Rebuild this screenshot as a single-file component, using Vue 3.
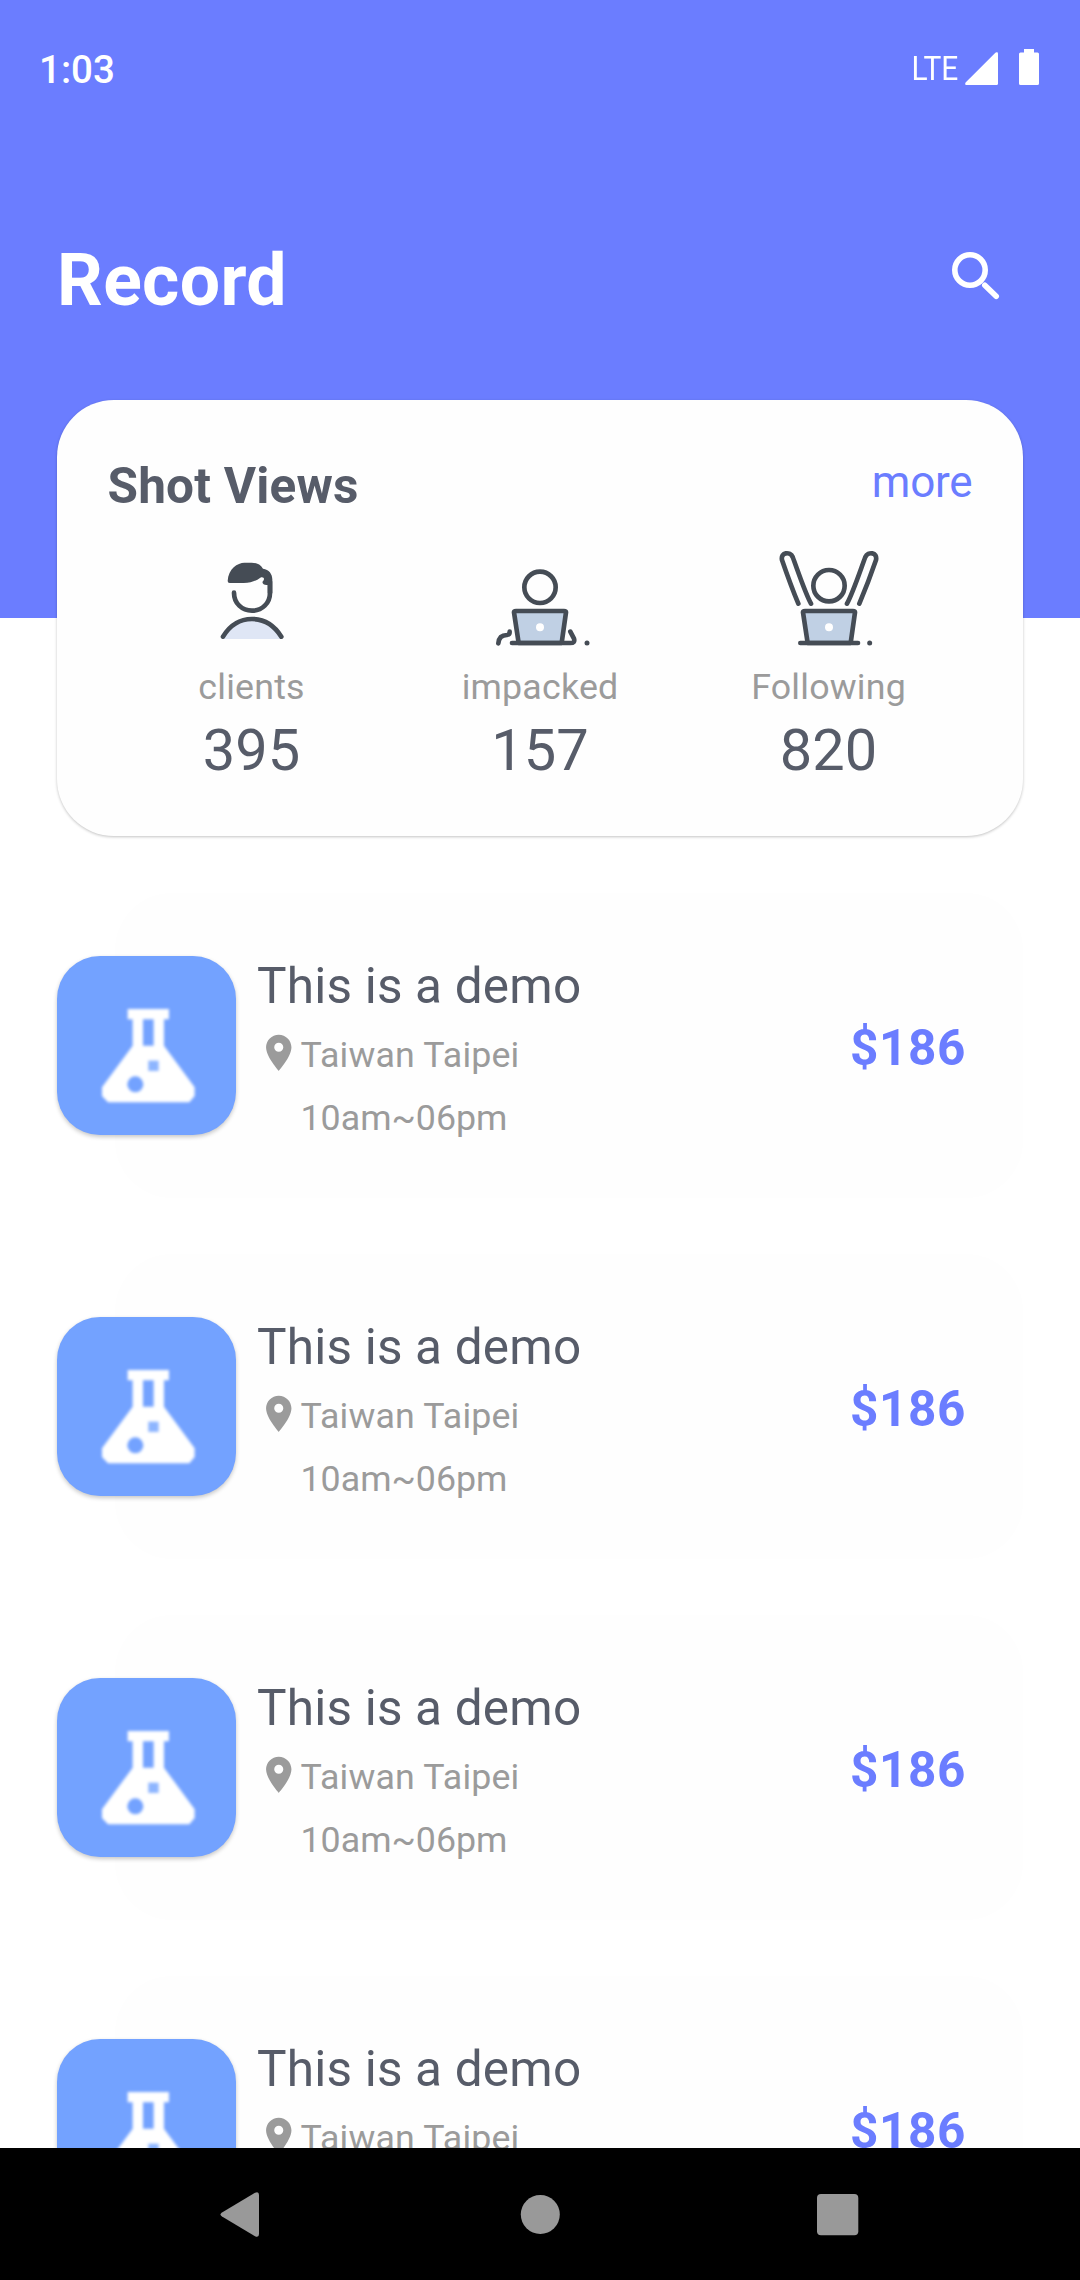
<script setup>
const stats = [
  { key: 'clients', label: 'clients', value: 395 },
  { key: 'impacked', label: 'impacked', value: 157 },
  { key: 'following', label: 'Following', value: 820 },
]
const records = Array.from({ length: 4 }, (_, id) => ({
  id,
  title: 'This is a demo',
  place: 'Taiwan Taipei',
  hours: '10am~06pm',
  price: '$186',
}))
</script>

<template>
  <div class="screen">
    <header class="hero">
      <div class="status">
        <span class="clock">1:03</span>
        <div class="indicators">
          <span class="lte">LTE</span>
          <svg class="signal" viewBox="0 0 33 33"><path d="M31.5 0.3Q33 0 33 1.6V31.5Q33 33 31.5 33H1.4Q-0.6 32.8 0.6 30.6L30.4 0.8Z" /></svg>
          <svg class="battery" viewBox="0 0 20 36"><path d="M5 0H15V3.5H18.5Q20 3.5 20 5V34.4Q20 36 18.4 36H1.6Q0 36 0 34.4V5Q0 3.5 1.5 3.5H5Z" /></svg>
        </div>
      </div>
      <div class="heading">
        <h1>Record</h1>
        <svg class="search" viewBox="0 0 50 50" fill="none" stroke="#fff">
          <circle cx="20" cy="20" r="15.2" stroke-width="5.6" />
          <path d="M30 31L32 33" stroke-width="4" />
          <path d="M34.8 35.2L46.2 46.2" stroke-width="5.6" stroke-linecap="round" />
        </svg>
      </div>
    </header>

    <section class="card">
      <div class="card-head">
        <h2>Shot Views</h2>
        <a class="more">more</a>
      </div>
      <div class="stats">
        <div v-for="s in stats" :key="s.key" class="stat">
          <svg v-if="s.key === 'clients'" class="figure" viewBox="483 504 300 300">
            <path d="M546 777Q578 718 633 718T721 777Z" fill="#dfe6f5" />
            <path d="M546 770Q578 717 633 717T721 770" class="line" />
            <path d="M579 638C579 670 603 692 633 692C663 692 687 670 687 638V605" class="line" />
            <path d="M560 603C562 566 590 548 610 548H632C648 548 658 554 666 566C684 568 694 582 694 598V640H680V615C668 617 660 608 667 602C672 596 667 589 658 593C646 602 631 609 608 609H566Q560 609 560 603Z" fill="#454c55" />
          </svg>
          <svg v-else-if="s.key === 'impacked'" class="figure" viewBox="270 84 300 300">
            <circle cx="420" cy="202" r="47" class="line" />
            <path d="M342 277Q342 273 348 273H492Q498 273 498 277L485 369H356Z" fill="#c0d0e4" class="line" />
            <circle cx="420" cy="322" r="12" fill="#fff" />
            <path d="M336 369H515M295 370Q297 345 321 345Q329 344 329 335M511 335L522 356Q526 369 511 369" class="line" />
            <circle cx="561" cy="369" r="7.5" fill="#454c55" />
          </svg>
          <svg v-else class="figure" viewBox="234 504 300 300">
            <circle cx="384" cy="617" r="47" class="line" />
            <path d="M292 671C279 640 254 572 243 540C238 516 268 514 275 531C289 568 312 638 330 671M475 671C488 640 514 572 525 540C530 516 501 514 493 531C479 568 456 638 438 671" class="line" />
            <path d="M306 697Q306 693 312 693H456Q462 693 462 697L449 789H320Z" fill="#c0d0e4" class="line" />
            <circle cx="384" cy="742" r="12" fill="#fff" />
            <path d="M298 789H471" class="line" />
            <circle cx="506" cy="789" r="7.5" fill="#454c55" />
          </svg>
          <span class="label">{{ s.label }}</span>
          <span class="value">{{ s.value }}</span>
        </div>
      </div>
    </section>

    <main class="list">
      <article v-for="r in records" :key="r.id" class="item">
        <div class="thumb">
          <svg class="flask" viewBox="182 232 286 286">
            <path fill="#fff" fill-rule="evenodd" d="M262 235H386V266H371V345L463 470V496L447 515H203L185 496V470L277 345V266H262ZM308 266V345H340V266Z" />
            <rect x="324" y="390" width="31" height="31" fill="#8db5ff" />
            <circle cx="285" cy="461" r="24" fill="#73a2ff" />
          </svg>
        </div>
        <div class="info">
          <h3>{{ r.title }}</h3>
          <p class="place">
            <svg class="pin" viewBox="0 0 24 24"><path d="M12 2C8.13 2 5 5.13 5 9c0 5.25 7 13 7 13s7-7.75 7-13c0-3.87-3.13-7-7-7zm0 9.5a2.5 2.5 0 0 1 0-5 2.5 2.5 0 0 1 0 5z" /></svg>
            <span>{{ r.place }}</span>
          </p>
          <p class="hours">{{ r.hours }}</p>
        </div>
        <span class="price">{{ r.price }}</span>
      </article>
    </main>

    <nav class="navbar">
      <svg viewBox="0 0 60 60"><path d="M43 8.800Q47 7 47 11V50Q47 54 43 52.200L10 32.600Q7 30.500 10 28.400Z" /></svg>
      <svg viewBox="0 0 60 60"><circle cx="30.300" cy="30.500" r="19.500" /></svg>
      <svg viewBox="0 0 60 60"><rect x="9" y="10" width="41.300" height="41.300" rx="4" /></svg>
    </nav>
  </div>
</template>

<style>
body {
  margin: 0;
}
</style>

<style scoped>
.screen {
  width: 1080px;
  height: 2280px;
  display: flex;
  flex-direction: column;
  overflow: hidden;
  background: #fff;
  font-family: Roboto, "Liberation Sans", sans-serif;
  color: #575c69;
}
h1, h2, h3, p {
  margin: 0;
}
svg {
  display: block;
  flex: none;
}
.hero {
  flex: none;
  box-sizing: border-box;
  height: 618px;
  padding-top: 40px;
  background: #6b7dff;
  color: #fff;
}
.status {
  display: flex;
  justify-content: space-between;
  height: 60px;
  padding: 0 41px 0 39px;
  line-height: 60px;
}
.clock {
  font-size: 38.5px;
  font-weight: 500;
}
.indicators {
  display: flex;
  align-items: flex-start;
}
.lte {
  margin: -2px 7px 0 0;
  font-size: 34px;
  transform: scaleX(0.88);
  transform-origin: right center;
}
.signal {
  width: 33px;
  height: 33px;
  margin: 12px 21px 0 0;
  fill: #fff;
}
.battery {
  width: 20px;
  height: 36px;
  margin-top: 9px;
  fill: #fff;
}
.heading {
  display: flex;
  justify-content: space-between;
  margin-top: 139px;
  padding: 0 80px 0 57px;
}
h1 {
  font-size: 71.5px;
  font-weight: 700;
  line-height: 84px;
  letter-spacing: 0.35px;
}
.search {
  width: 50px;
  height: 50px;
  margin-top: 11px;
}
.card {
  flex: none;
  box-sizing: border-box;
  width: 966px;
  height: 436px;
  margin: -218px auto 0;
  padding: 57px 49.5px 0;
  border-radius: 57px;
  background: #fefefe;
  box-shadow: 0 1px 3px rgba(0, 0, 0, 0.24);
}
.card-head {
  display: flex;
  justify-content: space-between;
  height: 58px;
  line-height: 58px;
}
h2 {
  padding-left: 1px;
  font-size: 49.5px;
  font-weight: 700;
  line-height: 58px;
  letter-spacing: 0.2px;
}
.more {
  height: 58px;
  margin: -4px 1px 0 0;
  font-size: 44px;
  letter-spacing: -0.2px;
  color: #6b7dff;
}
.stats {
  display: grid;
  grid-template-columns: repeat(3, 288.5px);
  margin: 33px 0 0 0.8px;
}
.stat {
  display: flex;
  flex-direction: column;
  align-items: center;
}
.figure {
  width: 100px;
  height: 100px;
}
.line {
  stroke: #454c55;
  stroke-width: 14;
  stroke-linecap: round;
  stroke-linejoin: round;
}
.line:not([fill]) {
  fill: none;
}
.label {
  margin-top: 18px;
  font-size: 35.75px;
  line-height: 42px;
  letter-spacing: 0.2px;
  color: #9b9b9b;
}
.value {
  margin-top: 8px;
  font-size: 57.75px;
  line-height: 68px;
}
.list {
  flex: 1;
  min-height: 0;
  overflow: hidden;
  padding-top: 57px;
}
.item {
  display: flex;
  align-items: center;
  box-sizing: border-box;
  height: 305px;
  margin: 0 57px 56px 115px;
  padding-right: 57px;
  border-radius: 57px;
  background: #fefefe;
}
.thumb {
  display: flex;
  box-sizing: border-box;
  flex: none;
  width: 179px;
  height: 179px;
  margin-left: -58px;
  padding: 51.5px 0 0 43.5px;
  border-radius: 43px;
  background: #73a2ff;
  box-shadow: 0 2px 4px rgba(0, 0, 0, 0.22);
}
.flask {
  width: 95.3px;
  height: 95.3px;
  filter: blur(1.4px);
}
.info {
  flex: 1;
  padding: 5px 0 0 21px;
}
h3 {
  font-size: 49.5px;
  font-weight: 400;
  line-height: 58px;
  letter-spacing: 0.2px;
}
.place,
.hours {
  font-size: 35.75px;
  line-height: 42px;
  color: #9b9b9b;
}
.place {
  display: flex;
  margin-top: 19px;
  letter-spacing: 0.15px;
}
.pin {
  width: 43.5px;
  height: 43.5px;
  margin: -3.5px 0 -2px;
  fill: #9b9b9b;
}
.hours {
  margin-top: 21px;
  padding-left: 43.5px;
}
.price {
  padding-top: 5px;
  font-size: 49.5px;
  font-weight: 700;
  line-height: 58px;
  letter-spacing: 0.6px;
  color: #6b7dff;
}
.navbar {
  flex: none;
  display: flex;
  align-items: center;
  justify-content: center;
  gap: 238px;
  height: 132px;
  background: #000;
}
.navbar svg {
  width: 60px;
  height: 60px;
  fill: #999;
}
</style>
